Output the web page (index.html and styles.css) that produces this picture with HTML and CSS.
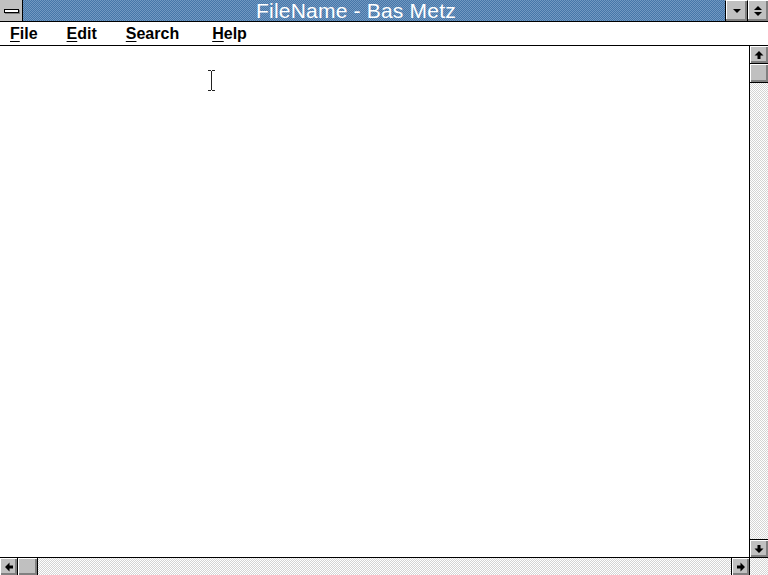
FILE: index.html
```html
<!DOCTYPE html>
<html>
<head>
<meta charset="utf-8">
<link rel="stylesheet" href="styles.css">
</head>
<body>
<div class="window">
  <div class="titlebar">
    <div class="sysmenu"><span class="sysbar"></span></div>
    <div class="title">FileName - Bas Metz</div>
    <div class="tbtn">
      <svg width="10" height="6" viewBox="0 0 10 6"><path d="M1 1h8L5 5z" fill="#000"/></svg>
    </div>
    <div class="tbtn last">
      <svg width="10" height="14" viewBox="0 0 10 14"><path d="M1 6h8L5 2z M1 8h8L5 12z" fill="#000"/></svg>
    </div>
  </div>
  <div class="menubar">
    <span class="mi"><u>F</u>ile</span>
    <span class="mi"><u>E</u>dit</span>
    <span class="mi"><u>S</u>earch</span>
    <span class="mi help"><u>H</u>elp</span>
  </div>
  <div class="client">
    <div class="editor">
      <svg class="ibeam" width="9" height="21" viewBox="0 0 9 21"><path d="M1 0.5h3M5 0.5h3M4.5 1v19M1 20.5h3M5 20.5h3" stroke="#222" stroke-width="1" fill="none"/></svg>
    </div>
    <div class="vscroll">
      <div class="sbtn">
        <svg width="10" height="10" viewBox="0 0 10 10"><path d="M5 1L0.5 5.5H3.5V9H6.5V5.5H9.5z" fill="#000"/></svg>
      </div>
      <div class="thumb"></div>
      <div class="track"></div>
      <div class="sbtn">
        <svg width="10" height="10" viewBox="0 0 10 10"><path d="M5 9L0.5 4.5H3.5V1H6.5V4.5H9.5z" fill="#000"/></svg>
      </div>
    </div>
    <div class="hscroll">
      <div class="sbtn">
        <svg width="10" height="10" viewBox="0 0 10 10"><path d="M1 5L5.5 0.5V3.5H9V6.5H5.5V9.5z" fill="#000"/></svg>
      </div>
      <div class="thumb"></div>
      <div class="track"></div>
      <div class="sbtn">
        <svg width="10" height="10" viewBox="0 0 10 10"><path d="M9 5L4.5 0.5V3.5H1V6.5H4.5V9.5z" fill="#000"/></svg>
      </div>
    </div>
    <div class="corner"></div>
  </div>
</div>
</body>
</html>
```

FILE: styles.css
```css
* { box-sizing: border-box; }
html, body { margin: 0; padding: 0; }
body {
  width: 768px;
  height: 575px;
  overflow: hidden;
  background: #fff;
  font-family: "Liberation Sans", Arial, sans-serif;
}
.window {
  width: 768px;
  height: 575px;
  display: flex;
  flex-direction: column;
}
.titlebar {
  height: 22px;
  display: flex;
  border-bottom: 1px solid #000;
  background-color: #5a88b6;
  background-image: repeating-conic-gradient(#4676a8 0 25%, #7299c2 0 50%);
  background-size: 2px 2px;
}
.sysmenu {
  width: 23px;
  background: #c0c0c0;
  border-right: 1px solid #000;
  display: flex;
  align-items: center;
  justify-content: center;
}
.sysbar {
  width: 15px;
  height: 4px;
  background: #fff;
  border: 1px solid #000;
  box-shadow: 1px 1px 0 #808080;
}
.title {
  flex: 1;
  display: flex;
  align-items: center;
  justify-content: center;
  padding-right: 36px;
  color: #fff;
  font-size: 21px;
  line-height: 21px;
  letter-spacing: 0.2px;
}
.tbtn {
  width: 22px;
  background: #c0c0c0;
  border-left: 1px solid #000;
  border-top: 1px solid #fff;
  box-shadow: inset -2px -2px 0 #808080, inset 1px 0 0 #fff;
  display: flex;
  align-items: center;
  justify-content: center;
}
.tbtn.last { width: 21px; }
.menubar {
  height: 24px;
  border-bottom: 1px solid #000;
  display: flex;
  align-items: center;
  padding-left: 10px;
  gap: 29px;
  font-size: 16px;
  font-weight: bold;
  color: #000;
}
.mi u { text-decoration-thickness: 1px; text-underline-offset: 2px; }
.mi.help { margin-left: 4px; }
.client {
  flex: 1;
  display: grid;
  grid-template-columns: 1fr 19px;
  grid-template-rows: 1fr 18px;
}
.editor {
  position: relative;
  background: #fff;
}
.ibeam {
  position: absolute;
  left: 207px;
  top: 24px;
}
.vscroll {
  border-left: 1px solid #000;
  display: flex;
  flex-direction: column;
}
.hscroll {
  border-top: 1px solid #000;
  display: flex;
}
.sbtn {
  flex: 0 0 18px;
  width: 18px;
  height: 18px;
  background: #c0c0c0;
  box-shadow: inset 1px 1px 0 #fff, inset -2px -2px 0 #808080;
  border-bottom: 1px solid #000;
  display: flex;
  align-items: center;
  justify-content: center;
}
.hscroll .sbtn {
  height: 17px;
  border-bottom: none;
  border-right: 1px solid #000;
}
.vscroll .thumb {
  flex: 0 0 19px;
  background: #c0c0c0;
  box-shadow: inset 1px 1px 0 #fff, inset -2px -2px 0 #808080;
  border-bottom: 1px solid #000;
}
.hscroll .thumb {
  flex: 0 0 20px;
  background: #c0c0c0;
  box-shadow: inset 1px 1px 0 #fff, inset -2px -2px 0 #808080;
  border-right: 1px solid #000;
}
.track {
  flex: 1;
  background-color: #ececec;
  background-image: repeating-conic-gradient(#d4d4d4 0 25%, #ffffff 0 50%);
  background-size: 2px 2px;
}
.vscroll .sbtn:last-child { border-bottom: none; border-top: 1px solid #000; }
.hscroll .sbtn:last-child { border-right: none; border-left: 1px solid #000; }
.corner {
  border-top: 1px solid #000;
  border-left: 1px solid #000;
  background-color: #ececec;
  background-image: repeating-conic-gradient(#d4d4d4 0 25%, #ffffff 0 50%);
  background-size: 2px 2px;
}
```
